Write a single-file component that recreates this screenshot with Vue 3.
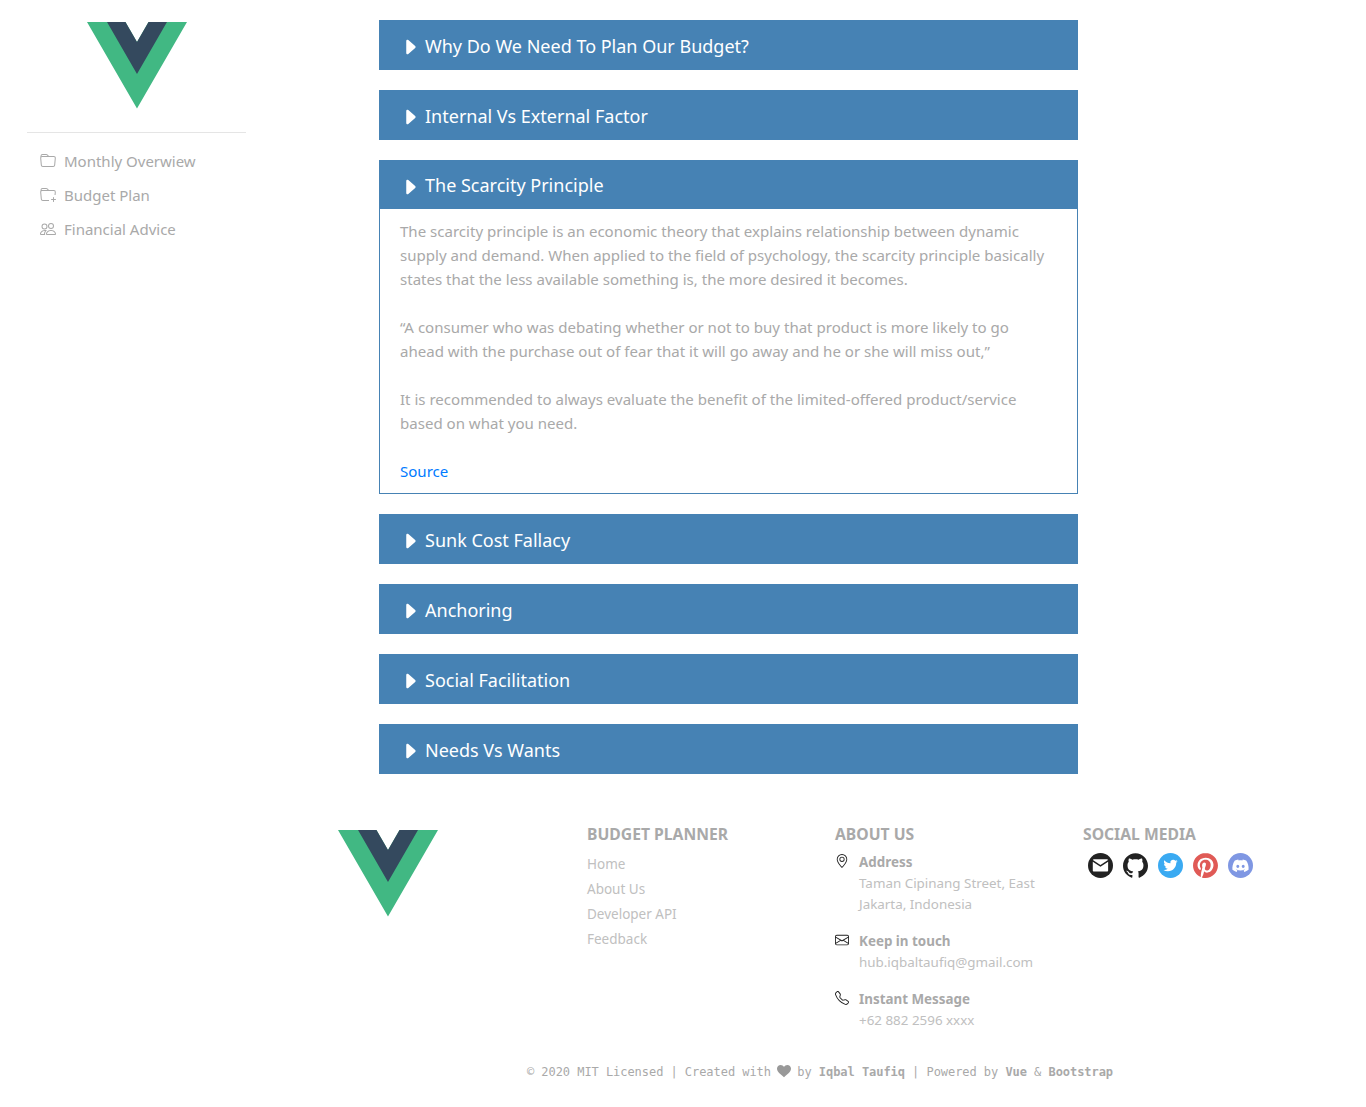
<template>
  <div class="page">
    <div class="top">
      <aside class="sidebar">
        <svg class="logo" viewBox="0 0 261.76 226.69">
          <path fill="#41b883" d="M161.096.001l-30.225 52.351L100.647.002H-.005L130.871 226.688 261.749.001z" />
          <path fill="#34495e" d="M161.096.001l-30.225 52.351L100.647.002H52.346l78.526 136.01L209.398.001z" />
        </svg>
        <hr class="rule" />
        <nav class="nav">
          <a v-for="item in navItems" :key="item.label" class="nav-item">
            <svg viewBox="0 0 16 16" fill="currentColor" fill-rule="evenodd"><path v-for="d in item.paths" :key="d" :d="d" /></svg>
            {{ item.label }}
          </a>
        </nav>
      </aside>

      <main class="topics">
        <section v-for="topic in topics" :key="topic" class="topic" :class="{ open: topic === openTopic }">
          <header class="topic-head">
            <svg viewBox="0 0 16 16" fill="#fff">
              <path d="m12.14 8.753-5.482 4.796c-.646.566-1.658.106-1.658-.753V3.204a1 1 0 0 1 1.659-.753l5.48 4.796a1 1 0 0 1 0 1.506z" />
            </svg>
            <span>{{ topic }}</span>
          </header>
          <div v-if="topic === openTopic" class="topic-body">
            <p>The scarcity principle is an economic theory that explains relationship between dynamic supply and demand. When applied to the field of psychology, the scarcity principle basically states that the less available something is, the more desired it becomes.</p>
            <p>“A consumer who was debating whether or not to buy that product is more likely to go ahead with the purchase out of fear that it will go away and he or she will miss out,”</p>
            <p>It is recommended to always evaluate the benefit of the limited-offered product/service based on what you need.</p>
            <a class="source">Source</a>
          </div>
        </section>
      </main>
    </div>

    <footer class="footer">
      <div class="columns">
        <div class="col">
          <svg class="logo" viewBox="0 0 261.76 226.69">
            <path fill="#41b883" d="M161.096.001l-30.225 52.351L100.647.002H-.005L130.871 226.688 261.749.001z" />
            <path fill="#34495e" d="M161.096.001l-30.225 52.351L100.647.002H52.346l78.526 136.01L209.398.001z" />
          </svg>
        </div>
        <div class="col">
          <h4>BUDGET PLANNER</h4>
          <a v-for="link in links" :key="link" class="link">{{ link }}</a>
        </div>
        <div class="col">
          <h4>ABOUT US</h4>
          <div v-for="c in contacts" :key="c.title" class="contact">
            <svg viewBox="0 0 16 16" fill="#222"><path v-for="d in c.paths" :key="d" :d="d" /></svg>
            <div>
              <strong>{{ c.title }}</strong>
              <p>{{ c.text }}</p>
            </div>
          </div>
        </div>
        <div class="col">
          <h4>SOCIAL MEDIA</h4>
          <div class="socials">
            <svg v-for="s in socials" :key="s.name" viewBox="0 0 24 24">
              <circle v-if="s.bg" cx="12" cy="12" r="12" :fill="s.bg" />
              <g :transform="s.transform">
                <path :fill="s.fill" :d="s.d" />
              </g>
            </svg>
          </div>
        </div>
      </div>
      <p class="copyright">
        © 2020 MIT Licensed | Created with
        <svg viewBox="0 0 16 16" fill="#999"><path d="M8 15C2.6 10.9 0 8.3 0 5.2 0 2.8 1.9 1 4.2 1 5.8 1 7.2 1.9 8 3.2 8.8 1.9 10.2 1 11.8 1 14.1 1 16 2.8 16 5.2c0 3.1-2.6 5.7-8 9.8z" /></svg>
        by <b>Iqbal Taufiq</b> | Powered by <b>Vue</b> &amp; <b>Bootstrap</b>
      </p>
    </footer>
  </div>
</template>

<script setup>
const openTopic = 'The Scarcity Principle'

const topics = [
  'Why Do We Need To Plan Our Budget?',
  'Internal Vs External Factor',
  'The Scarcity Principle',
  'Sunk Cost Fallacy',
  'Anchoring',
  'Social Facilitation',
  'Needs Vs Wants'
]

const navItems = [
  {
    label: 'Monthly Overwiew',
    paths: [
      'M9.828 4a3 3 0 0 1-2.12-.879l-.83-.828A1 1 0 0 0 6.173 2H2.5a1 1 0 0 0-1 .981L1.546 4h-1L.5 3a2 2 0 0 1 2-2h3.672a2 2 0 0 1 1.414.586l.828.828A2 2 0 0 0 9.828 3v1z',
      'M13.81 4H2.19a1 1 0 0 0-.996 1.09l.637 7a1 1 0 0 0 .995.91h10.348a1 1 0 0 0 .995-.91l.637-7A1 1 0 0 0 13.81 4zM2.19 3A2 2 0 0 0 .198 5.181l.637 7A2 2 0 0 0 2.826 14h10.348a2 2 0 0 0 1.991-1.819l.637-7A2 2 0 0 0 13.81 3H2.19z'
    ]
  },
  {
    label: 'Budget Plan',
    paths: [
      'm.5 3 .04.87a1.99 1.99 0 0 0-.342 1.311l.637 7A2 2 0 0 0 2.826 14H9v-1H2.826a1 1 0 0 1-.995-.91l-.637-7A1 1 0 0 1 2.19 4h11.62a1 1 0 0 1 .996 1.09L14.54 8h1.005l.256-2.819A2 2 0 0 0 13.81 3H9.828a2 2 0 0 1-1.414-.586l-.828-.828A2 2 0 0 0 6.172 1H2.5a2 2 0 0 0-2 2zm5.672-1a1 1 0 0 1 .707.293L7.586 3H2.19c-.24 0-.47.042-.683.12L1.5 2.98a1 1 0 0 1 1-.98h3.672z',
      'M13.5 10a.5.5 0 0 1 .5.5V12h1.5a.5.5 0 1 1 0 1H14v1.5a.5.5 0 1 1-1 0V13h-1.5a.5.5 0 0 1 0-1H13v-1.5a.5.5 0 0 1 .5-.5z'
    ]
  },
  {
    label: 'Financial Advice',
    paths: [
      'M15 14s1 0 1-1-1-4-5-4-5 3-5 4 1 1 1 1h8Zm-7.978-1A.261.261 0 0 1 7 12.996c.001-.264.167-1.03.76-1.72C8.312 10.629 9.282 10 11 10c1.717 0 2.687.63 3.24 1.276.593.69.758 1.457.76 1.72l-.008.002a.274.274 0 0 1-.014.002H7.022ZM11 7a2 2 0 1 0 0-4 2 2 0 0 0 0 4Zm3-2a3 3 0 1 1-6 0 3 3 0 0 1 6 0ZM6.936 9.28a5.88 5.88 0 0 0-1.23-.247A7.35 7.35 0 0 0 5 9c-4 0-5 3-5 4 0 .667.333 1 1 1h4.216A2.238 2.238 0 0 1 5 13c0-1.01.377-2.042 1.09-2.904.243-.294.526-.569.846-.816ZM4.92 10A5.493 5.493 0 0 0 4 13H1c0-.26.164-1.03.76-1.724.545-.636 1.492-1.256 3.16-1.275ZM1.5 5.5a3 3 0 1 1 6 0 3 3 0 0 1-6 0Zm3-2a2 2 0 1 0 0 4 2 2 0 0 0 0-4Z'
    ]
  }
]

const links = ['Home', 'About Us', 'Developer API', 'Feedback']

const contacts = [
  {
    title: 'Address',
    text: 'Taman Cipinang Street, East Jakarta, Indonesia',
    paths: [
      'M12.166 8.94c-.524 1.062-1.234 2.12-1.96 3.07A31.493 31.493 0 0 1 8 14.58a31.481 31.481 0 0 1-2.206-2.57c-.726-.95-1.436-2.008-1.96-3.07C3.304 7.867 3 6.862 3 6a5 5 0 0 1 10 0c0 .862-.305 1.867-.834 2.94zM8 16s6-5.686 6-10A6 6 0 0 0 2 6c0 4.314 6 10 6 10z',
      'M8 8a2 2 0 1 1 0-4 2 2 0 0 1 0 4zm0 1a3 3 0 1 0 0-6 3 3 0 0 0 0 6z'
    ]
  },
  {
    title: 'Keep in touch',
    text: 'hub.iqbaltaufiq@gmail.com',
    paths: [
      'M0 4a2 2 0 0 1 2-2h12a2 2 0 0 1 2 2v8a2 2 0 0 1-2 2H2a2 2 0 0 1-2-2V4Zm2-1a1 1 0 0 0-1 1v.217l7 4.2 7-4.2V4a1 1 0 0 0-1-1H2Zm13 2.383-4.708 2.825L15 11.105V5.383Zm-.034 6.876-5.64-3.471L8 9.583l-1.326-.795-5.64 3.47A1 1 0 0 0 2 13h12a1 1 0 0 0 .966-.741ZM1 11.105l4.708-2.897L1 5.383v5.722Z'
    ]
  },
  {
    title: 'Instant Message',
    text: '+62 882 2596 xxxx',
    paths: [
      'M3.654 1.328a.678.678 0 0 0-1.015-.063L1.605 2.3c-.483.484-.661 1.169-.45 1.77a17.568 17.568 0 0 0 4.168 6.608 17.569 17.569 0 0 0 6.608 4.168c.601.211 1.286.033 1.77-.45l1.034-1.034a.678.678 0 0 0-.063-1.015l-2.307-1.794a.678.678 0 0 0-.58-.122l-2.19.547a1.745 1.745 0 0 1-1.657-.459L5.482 8.062a1.745 1.745 0 0 1-.46-1.657l.548-2.19a.678.678 0 0 0-.122-.58L3.654 1.328zM1.884.511a1.745 1.745 0 0 1 2.612.163L6.29 2.98c.329.423.445.974.315 1.494l-.547 2.19a.678.678 0 0 0 .178.643l2.457 2.457a.678.678 0 0 0 .644.178l2.189-.547a1.745 1.745 0 0 1 1.494.315l2.306 1.794c.829.645.905 1.87.163 2.611l-1.034 1.034c-.74.74-1.846 1.065-2.877.702a18.634 18.634 0 0 1-7.01-4.42 18.634 18.634 0 0 1-4.42-7.009c-.362-1.03-.037-2.137.703-2.877L1.885.511z'
    ]
  }
]

const socials = [
  {
    name: 'mail',
    bg: '#222222',
    fill: '#fff',
    transform: 'translate(4.6 5.9) scale(0.92)',
    d: 'M1.2 0h13.6c.5 0 1 .3 1.1.8L8 6.2.1.8C.2.3.7 0 1.2 0zM0 2.6v9.2c0 .7.5 1.2 1.2 1.2h13.6c.7 0 1.2-.5 1.2-1.2V2.6L8 8z'
  },
  {
    name: 'github',
    fill: '#222222',
    d: 'M12 .297c-6.63 0-12 5.373-12 12 0 5.303 3.438 9.8 8.205 11.385.6.113.82-.258.82-.577 0-.285-.01-1.04-.015-2.04-3.338.724-4.042-1.61-4.042-1.61C4.422 18.07 3.633 17.7 3.633 17.7c-1.087-.744.084-.729.084-.729 1.205.084 1.838 1.236 1.838 1.236 1.07 1.835 2.809 1.305 3.495.998.108-.776.417-1.305.76-1.605-2.665-.3-5.466-1.332-5.466-5.93 0-1.31.465-2.38 1.235-3.22-.135-.303-.54-1.523.105-3.176 0 0 1.005-.322 3.3 1.23.96-.267 1.98-.399 3-.405 1.02.006 2.04.138 3 .405 2.28-1.552 3.285-1.23 3.285-1.23.645 1.653.24 2.873.12 3.176.765.84 1.23 1.91 1.23 3.22 0 4.61-2.805 5.625-5.475 5.92.42.36.81 1.096.81 2.22 0 1.606-.015 2.896-.015 3.286 0 .315.21.69.825.57C20.565 22.092 24 17.592 24 12.297c0-6.627-5.373-12-12-12'
  },
  {
    name: 'twitter',
    bg: '#3aaaf2',
    fill: '#fff',
    transform: 'translate(5.2 5.2) scale(0.57)',
    d: 'M23.953 4.57a10 10 0 01-2.825.775 4.958 4.958 0 002.163-2.723c-.951.555-2.005.959-3.127 1.184a4.92 4.92 0 00-8.384 4.482C7.69 8.095 4.067 6.13 1.64 3.162a4.822 4.822 0 00-.666 2.475c0 1.71.87 3.213 2.188 4.096a4.904 4.904 0 01-2.228-.616v.06a4.923 4.923 0 003.946 4.827 4.996 4.996 0 01-2.212.085 4.936 4.936 0 004.604 3.417 9.867 9.867 0 01-6.102 2.105c-.39 0-.779-.023-1.17-.067a13.995 13.995 0 007.557 2.209c9.053 0 13.998-7.496 13.998-13.985 0-.21 0-.42-.015-.63A9.935 9.935 0 0024 4.59z'
  },
  {
    name: 'pinterest',
    fill: '#e05a56',
    d: 'M12.017 0C5.396 0 .029 5.367.029 11.987c0 5.079 3.158 9.417 7.618 11.162-.105-.949-.199-2.403.041-3.439.219-.937 1.406-5.957 1.406-5.957s-.359-.72-.359-1.781c0-1.663.967-2.911 2.168-2.911 1.024 0 1.518.769 1.518 1.688 0 1.029-.653 2.567-.992 3.992-.285 1.193.6 2.165 1.775 2.165 2.128 0 3.768-2.245 3.768-5.487 0-2.861-2.063-4.869-5.008-4.869-3.41 0-5.409 2.562-5.409 5.199 0 1.033.394 2.143.889 2.741.099.12.112.225.085.345-.09.375-.293 1.199-.334 1.363-.053.225-.172.271-.401.165-1.495-.69-2.433-2.878-2.433-4.646 0-3.776 2.748-7.252 7.92-7.252 4.158 0 7.392 2.967 7.392 6.923 0 4.135-2.607 7.462-6.233 7.462-1.214 0-2.354-.629-2.758-1.379l-.749 2.848c-.269 1.045-1.004 2.352-1.498 3.146 1.123.345 2.306.535 3.55.535 6.607 0 11.985-5.365 11.985-11.987C23.97 5.39 18.592.026 11.985.026L12.017 0z'
  },
  {
    name: 'discord',
    bg: '#7f97e3',
    fill: '#fff',
    transform: 'translate(4.2 4.4) scale(0.65)',
    d: 'M20.317 4.3698a19.7913 19.7913 0 00-4.8851-1.5152.0741.0741 0 00-.0785.0371c-.211.3753-.4447.8648-.6083 1.2495-1.8447-.2762-3.68-.2762-5.4868 0-.1636-.3933-.4058-.8742-.6177-1.2495a.077.077 0 00-.0785-.037 19.7363 19.7363 0 00-4.8852 1.515.0699.0699 0 00-.0321.0277C.5334 9.0458-.319 13.5799.0992 18.0578a.0824.0824 0 00.0312.0561c2.0528 1.5076 4.0413 2.4228 5.9929 3.0294a.0777.0777 0 00.0842-.0276c.4616-.6304.8731-1.2952 1.226-1.9942a.076.076 0 00-.0416-.1057c-.6528-.2476-1.2743-.5495-1.8722-.8923a.077.077 0 01-.0076-.1277c.1258-.0943.2517-.1923.3718-.2914a.0743.0743 0 01.0776-.0105c3.9278 1.7933 8.18 1.7933 12.0614 0a.0739.0739 0 01.0785.0095c.1202.099.246.1981.3728.2924a.077.077 0 01-.0066.1276 12.2986 12.2986 0 01-1.873.8914.0766.0766 0 00-.0407.1067c.3604.698.7719 1.3628 1.225 1.9932a.076.076 0 00.0842.0286c1.961-.6067 3.9495-1.5219 6.0023-3.0294a.077.077 0 00.0313-.0552c.5004-5.177-.8382-9.6739-3.5485-13.6604a.061.061 0 00-.0312-.0286zM8.02 15.3312c-1.1825 0-2.1569-1.0857-2.1569-2.419 0-1.3332.9555-2.4189 2.157-2.4189 1.2108 0 2.1757 1.0952 2.1568 2.419 0 1.3332-.9555 2.4189-2.1569 2.4189zm7.9748 0c-1.1825 0-2.1569-1.0857-2.1569-2.419 0-1.3332.9554-2.4189 2.1569-2.4189 1.2108 0 2.1757 1.0952 2.1568 2.419 0 1.3332-.946 2.4189-2.1568 2.4189Z'
  }
]
</script>

<style scoped>
.page {
  min-height: 1107px;
  font-family: "Noto Sans", "Open Sans", sans-serif;
  color: #a9a9a9;
  background: #fff;
}

.top {
  display: flex;
  align-items: flex-start;
}

.sidebar {
  box-sizing: border-box;
  width: 379px;
  padding: 22.4px 0 0 27px;
}

.logo {
  display: block;
  width: 100px;
  height: 86.6px;
}

.sidebar .logo {
  margin-left: 60px;
}

.rule {
  width: 219px;
  margin: 22.6px 0 11px;
  border: 0;
  border-top: 1px solid #e5e5e5;
}

.nav-item {
  display: flex;
  align-items: center;
  height: 34px;
  padding-left: 13px;
  font-size: 15px;
}

.nav-item svg {
  width: 16px;
  height: 16px;
  margin-right: 8px;
}

.topics {
  width: 699px;
  padding-top: 20px;
}

.topic {
  margin-bottom: 20px;
}

.topic-head {
  display: flex;
  align-items: center;
  height: 50px;
  box-sizing: border-box;
  padding: 1px 0 0 21px;
  background: #4682b4;
  color: #fff;
  font-size: 18px;
}

.topic-head svg {
  width: 20px;
  height: 20px;
  margin: 3px 5px 0 0;
}

.topic.open .topic-head {
  height: 49px;
}

.topic-body {
  padding: 10px 23px 10px 20px;
  border: 1px solid #4682b4;
  border-top: 0;
  font-size: 15.05px;
  line-height: 24px;
}

.topic-body p {
  margin: 0 0 24px;
}

.source {
  color: #007bff;
}

.footer {
  padding-top: 29px;
}

.columns {
  display: flex;
  margin-left: 339px;
}

.col {
  width: 248px;
  min-width: 0;
}

.col:first-child .logo {
  margin: 7.4px 0 0 -1px;
}

.col h4 {
  margin: 0 0 7px;
  font-size: 15.7px;
  line-height: 22px;
  font-weight: 700;
  color: #a9a9a9;
}

.link {
  display: block;
  height: 25px;
  font-size: 13.5px;
  line-height: 25px;
  color: #c0c0c0;
}

.contact {
  display: flex;
  margin-bottom: 16px;
  font-size: 13.4px;
  line-height: 21px;
}

.contact svg {
  flex: none;
  width: 14px;
  height: 14px;
  margin: 2px 10px 0 0;
}

.contact strong {
  display: block;
  color: #a9a9a9;
}

.contact p {
  width: 190px;
  margin: 0;
  color: #c0c0c0;
}

.socials {
  display: flex;
  gap: 10px;
  padding: 1px 0 0 5px;
}

.socials svg {
  width: 25px;
  height: 25px;
}

.copyright {
  margin: 16px 0 0;
  padding-left: 527px;
  font-family: "DejaVu Sans Mono", monospace;
  font-size: 12px;
  line-height: 18px;
  letter-spacing: -0.05px;
  color: #a9a9a9;
  white-space: nowrap;
}

.copyright svg {
  width: 14px;
  height: 14px;
  margin: 0 -1px;
  vertical-align: -2px;
}
</style>

<style>
body {
  background: #fff;
}
</style>
